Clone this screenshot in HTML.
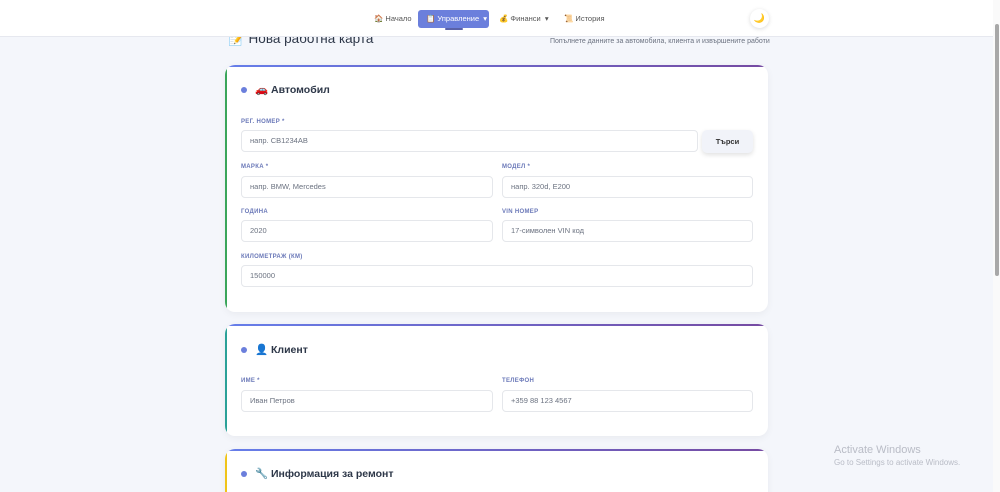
<!DOCTYPE html>
<html><head><meta charset="utf-8"><style>
*{box-sizing:border-box;margin:0;padding:0}
html,body{width:1000px;height:492px;overflow:hidden}
body{background:#f4f6fb;font-family:"Liberation Sans","DejaVu Sans",sans-serif;position:relative;color:#2d3748}
.hdr{position:absolute;left:0;top:0;width:993px;height:37px;background:#fff;border-bottom:1px solid #e6e8ef;z-index:5}
.nav{position:absolute;top:10px;font-size:7.5px;color:#555}
.active{position:absolute;left:418px;top:10px;width:71px;height:18px;background:#6b7fdc;border-radius:3px;color:#fff;font-size:7.5px;line-height:18px;padding-left:8px}
.und{position:absolute;left:445px;top:28px;width:18px;height:2px;background:#5a62a8;border-radius:1px}
.moon{position:absolute;left:750px;top:9px;width:19px;height:19px;border-radius:50%;background:#fff;box-shadow:0 1px 4px rgba(0,0,0,.15);font-size:9px;text-align:center;line-height:19px}
.sb{position:absolute;left:993px;top:0;width:7px;height:492px;background:#fafafa}
.thumb{position:absolute;left:995px;top:24px;width:4px;height:252px;background:#a8a8a8;border-radius:2px}
.title{position:absolute;left:228px;top:31px;font-size:13.5px;color:#2d3748}
.sub{position:absolute;left:550px;top:38px;font-size:7px;color:#6b7280}
.card{position:absolute;left:225px;width:543px;background:#fff;border-radius:10px;box-shadow:0 2px 8px rgba(0,0,0,.05);overflow:hidden}
.card:before{content:"";position:absolute;left:0;top:0;right:0;height:2px;background:linear-gradient(90deg,#667eea,#764ba2)}
.card .lb{position:absolute;left:0;top:0;bottom:0;width:2px}
.ch{position:absolute;left:16px;font-size:10.5px;font-weight:bold;color:#2d3748}
.dot{display:inline-block;width:6px;height:6px;border-radius:50%;background:#6b7fdc;margin-right:8px;vertical-align:middle}
.l{position:absolute;font-size:6px;font-weight:bold;color:#6a78b8;letter-spacing:.3px}
.in{position:absolute;height:22px;border:1px solid #e5e7eb;border-radius:4px;font-size:7.5px;color:#6b7280;line-height:20px;padding-left:8px;background:#fff}
.btn{position:absolute;left:477px;top:65px;width:51px;height:23px;background:#f1f3f9;border-radius:5px;box-shadow:0 2px 5px rgba(0,0,0,.12);font-size:7.5px;font-weight:bold;text-align:center;line-height:23px;color:#333}
.aw{position:absolute;left:834px;top:444px;color:#b9bcc6;font-size:11px}
.aw2{position:absolute;left:834px;top:458px;color:#b9bcc6;font-size:8px}
</style></head><body>
<div class="title">📝 Нова работна карта</div>
<div class="sub">Попълнете данните за автомобила, клиента и извършените работи</div>
<div class="hdr">
<div class="nav" style="left:374px;top:14px">🏠 Начало</div>
<div class="active">📋 Управление &nbsp;▾</div>
<div class="und"></div>
<div class="nav" style="left:499px;top:14px">💰 Финанси &nbsp;▾</div>
<div class="nav" style="left:564px;top:14px">📜 История</div>
<div class="moon">🌙</div>
</div>
<div class="card" style="top:65px;height:247px"><div class="lb" style="background:#3aa55a"></div>
<div class="ch" style="top:18px"><span class="dot"></span>🚗 Автомобил</div>
<div class="l" style="left:16px;top:54px">РЕГ. НОМЕР *</div>
<div class="in" style="left:16px;top:65px;width:457px">напр. CB1234AB</div>
<div class="btn">Търси</div>
<div class="l" style="left:16px;top:99px">МАРКА *</div>
<div class="in" style="left:16px;top:111px;width:252px">напр. BMW, Mercedes</div>
<div class="l" style="left:277px;top:99px">МОДЕЛ *</div>
<div class="in" style="left:277px;top:111px;width:251px">напр. 320d, E200</div>
<div class="l" style="left:16px;top:144px">ГОДИНА</div>
<div class="in" style="left:16px;top:155px;width:252px">2020</div>
<div class="l" style="left:277px;top:144px">VIN НОМЕР</div>
<div class="in" style="left:277px;top:155px;width:251px">17-символен VIN код</div>
<div class="l" style="left:16px;top:189px">КИЛОМЕТРАЖ (КМ)</div>
<div class="in" style="left:16px;top:200px;width:512px">150000</div>
</div>
<div class="card" style="top:324px;height:112px"><div class="lb" style="background:#2aa198"></div>
<div class="ch" style="top:19px"><span class="dot"></span>👤 Клиент</div>
<div class="l" style="left:16px;top:54px">ИМЕ *</div>
<div class="in" style="left:16px;top:66px;width:252px">Иван Петров</div>
<div class="l" style="left:277px;top:54px">ТЕЛЕФОН</div>
<div class="in" style="left:277px;top:66px;width:251px">+359 88 123 4567</div>
</div>
<div class="card" style="top:449px;height:60px"><div class="lb" style="background:#f0c419"></div>
<div class="ch" style="top:18px"><span class="dot"></span>🔧 Информация за ремонт</div>
</div>
<div class="aw">Activate Windows</div>
<div class="aw2">Go to Settings to activate Windows.</div>
<div class="sb"></div><div class="thumb"></div>
</body></html>
